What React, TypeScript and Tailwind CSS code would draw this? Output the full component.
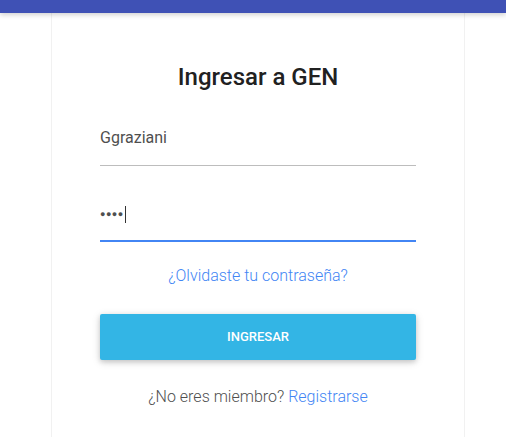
export default function App() {
    return (
        <div className="min-h-screen bg-white font-['Roboto',sans-serif]">
            <div className="h-[13px] bg-[#3f51b5] shadow-[0_2px_5px_rgba(0,0,0,0.18)] relative z-10" />
            <div className="ml-[51px] w-[414px] border-x border-[#f1f1f1] px-[48px] pt-[48px] pb-[40px]">
                <h1 className="text-center text-[24px] leading-[32px] font-medium text-[#212121]">
                    Ingresar a GEN
                </h1>

                <div className="mt-[35px] border-b border-[#bdbdbd] pb-[17px]">
                    <div className="text-[16px] leading-[20px] text-[#4f4f4f]">Ggraziani</div>
                </div>

                <div className="mt-[38px] border-b-2 border-[#4285f4] pb-[16px]">
                    <div className="flex items-center h-[20px] text-[16px] leading-[20px] text-[#4f4f4f]">
                        <span className="text-[9px] tracking-[0.5px]">●●●●</span>
                        <span className="ml-[1px] w-px h-[17px] bg-[#333]" />
                    </div>
                </div>

                <div className="mt-[24px] text-center text-[16px] leading-[20px] font-light text-[#4285f4]">
                    ¿Olvidaste tu contraseña?
                </div>

                <button className="mt-[28px] w-full h-[46px] rounded-[2px] bg-[#33b5e5] text-white text-[13px] font-medium uppercase shadow-[0_2px_5px_rgba(0,0,0,0.16),0_2px_10px_rgba(0,0,0,0.12)]">
                    Ingresar
                </button>

                <div className="mt-[27px] text-center text-[16px] leading-[20px] font-light text-[#4f4f4f]">
                    ¿No eres miembro? <span className="text-[#4285f4]">Registrarse</span>
                </div>
            </div>
        </div>
    )
}
